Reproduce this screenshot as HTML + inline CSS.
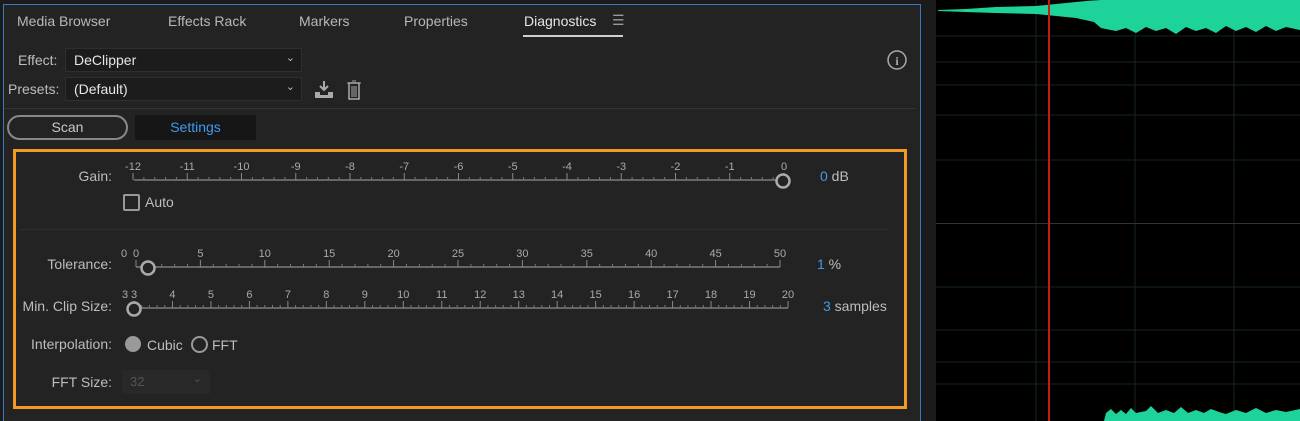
<!DOCTYPE html>
<html style="width:1300px;height:421px;overflow:hidden"><head><meta charset="utf-8"><style>
*{margin:0;padding:0;box-sizing:border-box}
body{width:1300px;height:421px;background:#1b1b1b;overflow:hidden;position:relative;font-family:"Liberation Sans",sans-serif;color:#c8c8c8}
.abs{position:absolute}
#panel{left:3px;top:4px;width:918px;height:417px;border:1px solid #3a78c0;border-bottom:none;background:#232323}
.tab{position:absolute;top:13px;font-size:14px;color:#b8b8b8}
.dd{position:absolute;background:#1c1c1c;border:1px solid #2e2e2e;height:24px;font-size:14px;color:#e6e6e6;padding:3px 8px}
.dd .ch{position:absolute;right:6px;top:2px;font-size:11px;color:#bbb}
.lbl{position:absolute;font-size:14px;color:#bdbdbd;text-align:right}
.blue{color:#3f9bef}
</style></head><body>
<div id="panel" class="abs"></div>
<div class="tab" style="left:17px">Media Browser</div>
<div class="tab" style="left:168px">Effects Rack</div>
<div class="tab" style="left:299px">Markers</div>
<div class="tab" style="left:404px">Properties</div>
<div class="tab" style="left:524px;color:#e6e6e6">Diagnostics</div>
<div class="tab" style="left:612px;top:12px;color:#999">☰</div>
<div class="abs" style="left:523px;top:35px;width:100px;height:2px;background:#cfcfcf"></div>

<div class="lbl" style="left:18px;top:52px">Effect:</div>
<div class="dd" style="left:65px;top:48px;width:237px">DeClipper<span class="ch">⌄</span></div>
<div class="lbl" style="left:8px;top:81px">Presets:</div>
<div class="dd" style="left:65px;top:77px;width:237px">(Default)<span class="ch">⌄</span></div>
<svg class="abs" style="left:312px;top:78px" width="60" height="24">
<path d="M12 3v9M8 8l4 4 4-4" stroke="#aaa" stroke-width="2" fill="none"/>
<path d="M3 14h5v3h8v-3h5v6H3z" fill="#aaa"/>
<rect x="37" y="5" width="10" height="16" fill="none" stroke="#aaa" stroke-width="1.5"/>
<path d="M35 5h14M40 3h4M40 8v11M42 8v11M44 8v11" stroke="#aaa" stroke-width="1"/>
</svg>
<svg class="abs" style="left:886px;top:50px" width="22" height="22"><circle cx="11" cy="10" r="9" fill="none" stroke="#aaa" stroke-width="1.5"/><text x="11" y="15" font-size="12" font-family="Liberation Serif" fill="#aaa" text-anchor="middle" font-weight="bold">i</text></svg>
<div class="abs" style="left:4px;top:108px;width:912px;height:1px;background:#333"></div>

<div class="abs" style="left:7px;top:115px;width:121px;height:25px;border:2px solid #888;border-radius:13px;text-align:center;font-size:14px;line-height:21px;color:#c8c8c8">Scan</div>
<div class="abs" style="left:135px;top:115px;width:121px;height:25px;background:#161616;text-align:center;font-size:14px;line-height:25px;color:#3f9bef">Settings</div>

<div class="abs" style="left:13px;top:149px;width:894px;height:260px;border:3px solid #f29a23;background:#232323"></div>
<div class="abs" style="left:20px;top:229px;width:868px;height:1px;background:#2e2e2e"></div>

<div class="lbl" style="left:0;width:112px;top:168px">Gain:</div>
<div class="lbl" style="left:0;width:112px;top:256px">Tolerance:</div>
<div class="lbl" style="left:0;width:112px;top:298px">Min. Clip Size:</div>
<div class="lbl" style="left:0;width:112px;top:336px">Interpolation:</div>
<div class="lbl" style="left:0;width:112px;top:374px">FFT Size:</div>

<div class="abs" style="left:123px;top:194px;width:17px;height:17px;border:2px solid #999;border-radius:2px"></div>
<div class="lbl" style="left:145px;top:194px">Auto</div>

<div class="abs" style="left:125px;top:336px;width:16px;height:16px;border-radius:50%;background:#999"></div>
<div class="lbl" style="left:147px;top:337px">Cubic</div>
<div class="abs" style="left:191px;top:336px;width:17px;height:17px;border-radius:50%;border:2px solid #999"></div>
<div class="lbl" style="left:212px;top:337px">FFT</div>
<div class="abs" style="left:122px;top:370px;width:88px;height:24px;background:#282828;font-size:13px;color:#555;padding:4px 8px">32<span style="position:absolute;right:8px;top:2px;font-size:11px">⌄</span></div>

<div class="lbl" style="left:820px;top:168px"><span class="blue">0</span> dB</div>
<div class="lbl" style="left:817px;top:256px"><span class="blue">1</span> %</div>
<div class="lbl" style="left:823px;top:298px"><span class="blue">3</span> samples</div>

<svg id="sl" class="abs" style="left:0;top:0" width="920" height="421"></svg>

<svg class="abs" style="left:936px;top:0" width="364" height="421">
<rect width="364" height="421" fill="#000"/>
<g stroke="#14281a" stroke-width="1">
<line x1="0" y1="36" x2="364" y2="36"/><line x1="0" y1="62" x2="364" y2="62"/><line x1="0" y1="85" x2="364" y2="85"/><line x1="0" y1="115" x2="364" y2="115"/><line x1="0" y1="160" x2="364" y2="160"/><line x1="0" y1="287" x2="364" y2="287"/><line x1="0" y1="330" x2="364" y2="330"/><line x1="0" y1="362" x2="364" y2="362"/><line x1="0" y1="384" x2="364" y2="384"/>
<line x1="100" y1="0" x2="100" y2="421"/><line x1="199" y1="0" x2="199" y2="421"/><line x1="298" y1="0" x2="298" y2="421"/>
</g>
<line x1="0" y1="223.5" x2="364" y2="223.5" stroke="#333"/>
<path d="M2 10 L30 9 L60 7 L100 6 L130 3 L150 1 L165 0 L364 0 L364 30 L350 27 L340 31 L330 26 L320 32 L310 27 L300 31 L290 26 L280 33 L270 28 L260 31 L250 27 L240 34 L230 28 L220 31 L210 27 L200 33 L190 28 L180 31 L170 29 L165 28 L158 22 L140 18 L120 16 L100 14 L60 13 L30 12 L2 11Z" fill="#1ed39a"/>
<path d="M168 421 L170 413 L175 409 L180 414 L185 410 L190 414 L195 408 L200 413 L210 411 L215 406 L222 413 L230 410 L238 413 L245 407 L252 413 L260 410 L268 413 L275 409 L283 412 L290 414 L300 410 L310 413 L320 408 L330 413 L340 410 L350 412 L364 409 L364 421Z" fill="#1ed39a"/>
<line x1="113" y1="0" x2="113" y2="421" stroke="#c81818" stroke-width="2"/>
</svg>
<div class="abs" style="left:921px;top:0;width:15px;height:421px;background:#1b1b1b"></div>

<script>
var s=document.getElementById('sl'),h='';
function slider(x0,x1,y,labels,minor,knob,lx0,lx1){
 h+='<line x1="'+x0+'" y1="'+y+'" x2="'+x1+'" y2="'+y+'" stroke="#666" stroke-width="2"/>';
 var n=labels.length-1;
 for(var i=0;i<=n;i++){var x=lx0+(lx1-lx0)*i/n;
  h+='<text x="'+x+'" y="'+(y-10)+'" font-size="11" fill="#aaa" text-anchor="middle" font-family="Liberation Sans">'+labels[i]+'</text>';
  h+='<line x1="'+x+'" y1="'+(y-7)+'" x2="'+x+'" y2="'+y+'" stroke="#888"/>';
  if(i<n)for(var j=1;j<minor;j++){var mx=x+(lx1-lx0)/n*j/minor;h+='<line x1="'+mx+'" y1="'+(y-3)+'" x2="'+mx+'" y2="'+y+'" stroke="#777"/>';}
 }
 h+='<circle cx="'+knob+'" cy="'+(y+1)+'" r="6.5" fill="#232323" stroke="#aaa" stroke-width="2.5"/>';
}
var g=[];for(var i=-12;i<=0;i++)g.push(i);
slider(134,782,180,g,5,783,133,784);
var t=[];for(var i=0;i<=50;i+=5)t.push(i);
slider(136,780,267,t,5,148,136,780);
var m=[];for(var i=3;i<=20;i++)m.push(i);
slider(133,788,308,m,5,134,134,788);
h+='<text x="124" y="257" font-size="11" fill="#aaa" text-anchor="middle">0</text><text x="125" y="298" font-size="11" fill="#aaa" text-anchor="middle">3</text>';
s.innerHTML=h;
</script>
</body></html>
